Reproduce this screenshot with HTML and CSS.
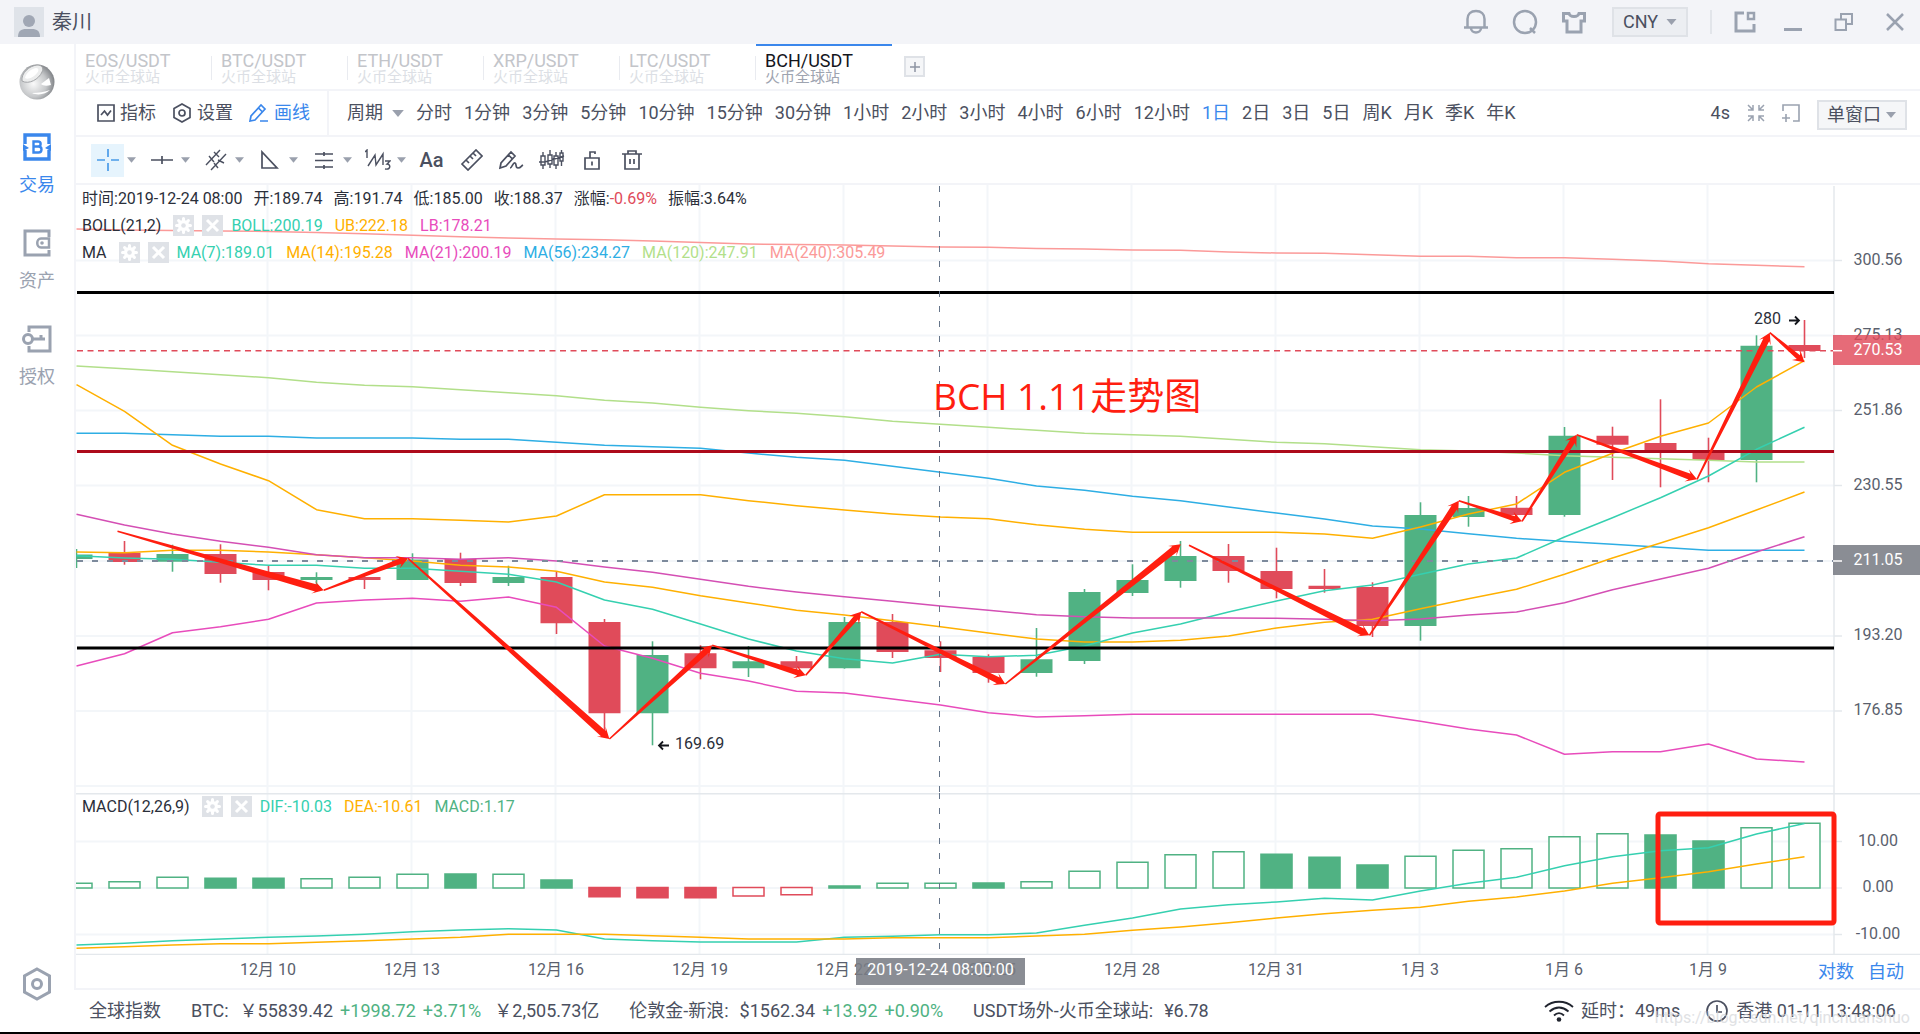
FILE: index.html
```html
<!DOCTYPE html>
<html lang="zh-CN">
<head>
<meta charset="utf-8">
<title>BCH/USDT</title>
<link rel="stylesheet" href="styles.css">
</head>
<body>
<svg class="defs" width="0" height="0" aria-hidden="true">
  <symbol id="caret" viewBox="0 0 10 6"><path d="M0 0h10L5 6z" fill="#9aa0ad"/></symbol>
  <symbol id="gear" viewBox="0 0 21 21"><rect width="21" height="21" fill="#dfe2e7"/><g stroke="#fff" stroke-width="3" stroke-linecap="round"><path d="M10.5 3.500v14M3.500 10.500h14M5.600 5.600l9.800 9.800M15.400 5.600l-9.800 9.800"/></g><circle cx="10.500" cy="10.500" r="5.500" fill="#fff"/><circle cx="10.500" cy="10.500" r="2.300" fill="#dfe2e7"/></symbol>
  <symbol id="cross" viewBox="0 0 21 21"><rect width="21" height="21" fill="#dfe2e7"/><path d="M5 5l11 11M16 5L5 16" stroke="#fff" stroke-width="3"/></symbol>
</svg>
<div class="app">
  <header class="titlebar">
    <svg class="avatar" width="30" height="30" viewBox="0 0 30 30"><rect width="30" height="30" fill="#dfe3e9"/><circle cx="15" cy="14" r="6" fill="#a0a7b4"/><path d="M4 30c0-6 3-8 8-8h6c5 0 8 2 8 8z" fill="#a0a7b4"/></svg>
    <span class="user">秦川</span>
    <div class="window-tools">
      <button aria-label="通知"><svg width="24" height="26" viewBox="0 0 24 26"><path d="M3.500 18V10c0-5 3.500-8 8.500-8s8.500 3 8.500 8v8M0 18.500h24M7 19c0 6 10 6 10 0" class="g2b"/></svg></button>
      <button aria-label="搜索"><svg width="26" height="26" viewBox="0 0 26 26"><circle cx="13" cy="13" r="11" class="g2b"/><path d="M18 19l5 5" class="g2b"/></svg></button>
      <button aria-label="皮肤"><svg width="24" height="24" viewBox="0 0 24 24"><path d="M1.500 3.500h5.500c1 4 9 4 10 0h5.500V11H19v11H5V11H1.500z" class="g3"/></svg></button>
      <label class="select currency"><select aria-label="货币"><option>CNY</option></select><svg width="11" height="6"><use href="#caret"/></svg></label>
      <span class="divider"></span>
      <button class="pin" aria-label="置顶"><svg width="24" height="24" viewBox="0 0 24 24"><path d="M10 3H2v18h18v-7" class="g3"/><path d="M14 3h6v6h-6z" class="g2b"/></svg></button>
      <button class="minimize" aria-label="最小化"><svg width="22" height="22" viewBox="0 0 22 22"><path d="M0 18.500h18" class="g3"/></svg></button>
      <button class="restore" aria-label="还原"><svg width="20" height="20" viewBox="0 0 20 20"><path d="M7 7V2h11v10h-5M1.500 7.500H12V18H1.500z" class="g2"/></svg></button>
      <button class="close" aria-label="关闭"><svg width="18" height="18" viewBox="0 0 18 18"><path d="M1 1l16 16M17 1L1 17" class="g2b"/></svg></button>
    </div>
  </header>

  <div class="body">
    <nav class="sidebar">
      <svg class="logo" width="36" height="36" viewBox="0 0 36 36"><defs><radialGradient id="ball" cx=".4" cy=".55" r=".62"><stop offset="0" stop-color="#fafafa"/><stop offset=".6" stop-color="#c6c8ca"/><stop offset="1" stop-color="#7d8084"/></radialGradient></defs><circle cx="18" cy="18" r="17.500" fill="url(#ball)"/><path d="M3 17C2 9 10 2 18 1c5 0 7 3 5 7-3 7-13 13-20 9z" fill="#eceded" stroke="#a3a5a8" stroke-width="1"/><path d="M6 14c1-5 6-9 11-10 3 0 3 3 1 5-3 4-9 7-12 5z" fill="#fff"/><path d="M22 20l8-6 2 7c-4 1-8 1-10-1z" fill="#fff"/><path d="M13 29c6 0 13-1 18-3-4 4-12 6-18 3z" fill="#fff"/></svg>
      <a href="#trade" class="active"><svg width="28" height="28" viewBox="0 0 28 28"><path d="M2 11V2h24v9M2 17v9h24v-9" fill="none" stroke="#3a87ec" stroke-width="3.400"/><path d="M0 11l6 4-6 3zM28 11l-6 4 6 3z" fill="#3a87ec"/><path d="M10.500 8.500h4.500c3.500 0 3.500 5 0 5h-4.500zm0 5h5c4 0 4 6 0 6h-5z" fill="none" stroke="#3a87ec" stroke-width="2.400"/></svg>交易</a>
      <a href="#assets"><svg width="28" height="28" viewBox="0 0 28 28"><path d="M26 8V2H2v24h24v-5" class="g3"/><path d="M26 9.500h-8c-5 0-5 9 0 9h8z" class="g2b"/><circle cx="19" cy="14" r="1.800" fill="#9aa2b0"/></svg>资产</a>
      <a href="#auth"><svg width="30" height="28" viewBox="0 0 30 28"><path d="M7 7V2h21v24H7v-5" class="g3"/><circle cx="6" cy="14" r="4.500" class="g3"/><path d="M11 14h12M19 14v-4" class="g3"/></svg>授权</a>
      <button class="setup" aria-label="设置"><svg width="30" height="34" viewBox="0 0 30 34"><path d="M15 2l12.500 7v16L15 32 2.500 25V9z" class="g3"/><circle cx="15" cy="17" r="4.500" class="g3"/></svg></button>
    </nav>

    <main class="main">
      <div class="work">
        <div class="tabs" role="tablist">
          <button role="tab">EOS/USDT<small>火币全球站</small></button>
          <button role="tab">BTC/USDT<small>火币全球站</small></button>
          <button role="tab">ETH/USDT<small>火币全球站</small></button>
          <button role="tab">XRP/USDT<small>火币全球站</small></button>
          <button role="tab">LTC/USDT<small>火币全球站</small></button>
          <button role="tab" class="active" aria-selected="true">BCH/USDT<small>火币全球站</small></button>
          <button class="add" aria-label="添加"><svg width="10" height="10" viewBox="0 0 10 10"><path d="M5 0v10M0 5h10" stroke="#8d94a2" stroke-width="1.500"/></svg></button>
        </div>

        <div class="toolbar">
          <div class="group modes">
            <button><svg width="18" height="18" viewBox="0 0 18 18"><path d="M1 1h16v16H1zM4 11l3.500-4 3 4L14 6.500" class="d2"/></svg>指标</button>
            <button><svg width="20" height="20" viewBox="0 0 20 20"><path d="M10 1l8 4.500v9L10 19l-8-4.500v-9z" class="d2"/><circle cx="10" cy="10" r="3" class="d2"/></svg>设置</button>
            <button class="on"><svg width="20" height="18" viewBox="0 0 20 18"><path d="M1 17l1-5L12 1l4 4L6 16zM9.500 4l4 4M11 17h8" fill="none" stroke="#3a87ec" stroke-width="1.700"/></svg>画线</button>
          </div>
          <div class="group periods">
            <button class="pick">周期<svg width="12" height="7"><use href="#caret"/></svg></button>
            <button>分时</button><button>1分钟</button><button>3分钟</button><button>5分钟</button><button>10分钟</button><button>15分钟</button><button>30分钟</button><button>1小时</button><button>2小时</button><button>3小时</button><button>4小时</button><button>6小时</button><button>12小时</button><button class="on">1日</button><button>2日</button><button>3日</button><button>5日</button><button>周K</button><button>月K</button><button>季K</button><button>年K</button>
          </div>
          <div class="group side">
            <span>4s</span>
            <button aria-label="收起"><svg width="18" height="18" viewBox="0 0 18 18"><path d="M1 1l5 5M6 1v5H1M17 1l-5 5M12 1v5h5M1 17l5-5M1 12h5v5M17 17l-5-5M12 17v-5h5" class="g1"/></svg></button>
            <button aria-label="新窗口"><svg width="18" height="18" viewBox="0 0 18 18"><path d="M1 7V1h16v16h-6M4 10v8M0 14h8" class="g2s"/></svg></button>
            <label class="select windows"><select aria-label="窗口"><option>单窗口</option></select><svg width="10" height="6"><use href="#caret"/></svg></label>
          </div>
        </div>

        <div class="draw">
          <button class="has-menu picked" aria-label="十字线"><i><svg width="22" height="22" viewBox="0 0 22 22"><path d="M11 0v8M11 14v8M0 11h8M14 11h8" stroke="#4a9be8" stroke-width="1.700"/></svg></i><svg width="9" height="6"><use href="#caret"/></svg></button>
          <button class="has-menu" aria-label="直线"><i><svg width="22" height="22" viewBox="0 0 22 22"><path d="M0 11h22M11 7v8" class="d2"/></svg></i><svg width="9" height="6"><use href="#caret"/></svg></button>
          <button class="has-menu" aria-label="平行线"><i><svg width="22" height="22" viewBox="0 0 22 22"><path d="M1 16L15 1M6 21L21 5M4 7l5 6M9 3l5 5M9 14l4 5M13 11l6 3" class="d1"/></svg></i><svg width="9" height="6"><use href="#caret"/></svg></button>
          <button class="has-menu" aria-label="形状"><i><svg width="20" height="20" viewBox="0 0 20 20"><path d="M2 2v16h15z" class="d2"/></svg></i><svg width="9" height="6"><use href="#caret"/></svg></button>
          <button class="has-menu" aria-label="斐波那契"><i><svg width="20" height="20" viewBox="0 0 20 20"><path d="M1 4h18M1 10.500h18M1 17h18M10 2v4M10 15v4" class="d2"/></svg></i><svg width="9" height="6"><use href="#caret"/></svg></button>
          <button class="has-menu" aria-label="波浪"><i><svg width="26" height="22" viewBox="0 0 26 22"><path d="M0 3l2-2v8M3 17L10 6l1 10L18 5v11M20 12h5l-3 3c4 0 4 6-2 5" class="d1"/></svg></i><svg width="9" height="6"><use href="#caret"/></svg></button>
          <button aria-label="文字"><i class="aa">Aa</i></button>
          <button aria-label="尺子"><i><svg width="22" height="22" viewBox="0 0 22 22"><path d="M1 15L15 1l6 6L7 21zM5 11l3 3M9 7l3 3M12 4l3 3" class="d2"/></svg></i></button>
          <button aria-label="画笔"><i><svg width="25" height="20" viewBox="0 0 25 20"><path d="M1 18l1-5L12 2l4 4L7 16zM9.500 5l4 4M11 18c2 0 3-6 5-5s0 5 3 5 3-2 5-3" class="d2"/></svg></i></button>
          <button aria-label="形态"><i><svg width="26" height="20" viewBox="0 0 26 20"><path d="M2 6h4v9H2zM4 2v4M4 15v4M9 5h4v9H9zM11 0v5M11 14v4M15 6h4v9h-4zM17 2v4M17 15v4M21 3h3v8h-3zM22.500 0v3M22.500 11v5M0 12h6L25 6" class="d1"/></svg></i></button>
          <button aria-label="锁定"><i><svg width="18" height="20" viewBox="0 0 18 20"><path d="M2 8h14v11H2zM7 8V2h5v2M9 11.500v4" class="d2"/></svg></i></button>
          <button aria-label="删除"><i><svg width="20" height="20" viewBox="0 0 20 20"><path d="M0 4h20M3 4v15h14V4M6 4V1h8v3M8 9v5M12 9v5" class="d2"/></svg></i></button>
        </div>

        <section class="chart">
          <div class="pane">
            <svg id="price" viewBox="76 185 1844 608"></svg>
            <div class="legend">
              <p class="quote"><span>时间:2019-12-24 08:00</span><span>开:189.74</span><span>高:191.74</span><span>低:185.00</span><span>收:188.37</span><span>涨幅:<b class="c-down">-0.69%</b></span><span>振幅:3.64%</span></p>
              <p><span class="name">BOLL(21,2)</span><button aria-label="设置 BOLL"><svg width="21" height="21"><use href="#gear"/></svg></button><button aria-label="关闭 BOLL"><svg width="21" height="21"><use href="#cross"/></svg></button><span class="c-teal">BOLL:200.19</span><span class="c-gold">UB:222.18</span><span class="c-pink">LB:178.21</span></p>
              <p><span class="name">MA</span><button aria-label="设置 MA"><svg width="21" height="21"><use href="#gear"/></svg></button><button aria-label="关闭 MA"><svg width="21" height="21"><use href="#cross"/></svg></button><span class="c-teal">MA(7):189.01</span><span class="c-gold">MA(14):195.28</span><span class="c-pink">MA(21):200.19</span><span class="c-blue">MA(56):234.27</span><span class="c-lime">MA(120):247.91</span><span class="c-rose">MA(240):305.49</span></p>
            </div>
          </div>
          <div class="pane">
            <svg id="macd" viewBox="76 793 1844 162"></svg>
            <div class="legend low">
              <p><span class="name">MACD(12,26,9)</span><button aria-label="设置 MACD"><svg width="21" height="21"><use href="#gear"/></svg></button><button aria-label="关闭 MACD"><svg width="21" height="21"><use href="#cross"/></svg></button><span class="c-teal">DIF:-10.03</span><span class="c-gold">DEA:-10.61</span><span class="c-up">MACD:1.17</span></p>
            </div>
          </div>
          <div class="pane">
            <svg id="dates" viewBox="76 955 1844 33"></svg>
            <div class="scale"><button>对数</button><button>自动</button></div>
          </div>
        </section>
      </div>

      <footer class="status">
        <span>全球指数</span>
        <span class="item"><span class="key">BTC:</span><span>￥55839.42</span><b class="c-up">+1998.72</b><b class="c-up">+3.71%</b><span class="yen">￥2,505.73亿</span></span>
        <span class="item"><span class="key">伦敦金-新浪:</span><span>$1562.34</span><b class="c-up">+13.92</b><b class="c-up">+0.90%</b></span>
        <span class="item"><span class="key">USDT场外-火币全球站:</span><span>¥6.78</span></span>
        <span class="net"><svg width="30" height="22" viewBox="0 0 30 22"><path d="M1 7c8-7 20-7 28 0M5.500 11.500c6-5 13-5 19 0M10 15.500c3-3 7-3 10 0" fill="none" stroke="#20242e" stroke-width="1.800"/><circle cx="15" cy="19.500" r="2.300" fill="#20242e"/></svg>延时：49ms</span>
        <span class="net clock"><svg width="22" height="22" viewBox="0 0 22 22"><circle cx="11" cy="11" r="10" class="d2"/><path d="M11 5v7h5" class="d2"/></svg>香港 01-11 13:48:06</span>
        <span class="watermark">https://blog.csdn.net/qinchuanshuo</span>
      </footer>
    </main>
  </div>
</div>
<script src="chart.js"></script>
</body>
</html>
```
FILE: styles.css
```css
* { box-sizing: border-box; }
body { margin: 0; background: #fff; color: #4b5060; font: 18px/24px Roboto, "Noto Sans CJK SC", sans-serif; }
button, select { font: inherit; color: inherit; background: none; border: 0; padding: 0; margin: 0; cursor: pointer; }
svg { display: block; flex: none; }
p { margin: 0; }
b { font-weight: 400; }
a { color: inherit; text-decoration: none; }
.defs { position: absolute; }

.g1, .g2, .g2b, .g2s, .g3 { fill: none; stroke: #9aa2b0; }
.g1 { stroke-width: 1.5; }
.g2 { stroke-width: 2; }
.g2b { stroke-width: 2.5; }
.g2s { stroke-width: 1.6; }
.g3 { stroke-width: 3; }
.d1, .d2 { fill: none; stroke: #4b5060; }
.d1 { stroke-width: 1.4; }
.d2 { stroke-width: 1.7; }

.c-down { color: #e04b5a; }
.c-up { color: #50b283; }
.c-teal { color: #35d0b0; }
.c-gold { color: #ffb000; }
.c-pink { color: #e84cbc; }
.c-blue { color: #2eaee4; }
.c-lime { color: #b2df8a; }
.c-rose { color: #fb9a99; }

.app { display: flex; flex-direction: column; min-height: 100vh; border-bottom: 2px solid #000; }

.titlebar { display: flex; align-items: center; height: 44px; padding: 0 16px 0 14px; background: #f3f4f8; }
.user { margin-left: 8px; font-size: 20px; }
.window-tools { display: flex; align-items: center; margin-left: auto; }
.window-tools button { margin-left: 24px; }
.window-tools .pin { margin-left: 22px; }
.window-tools .minimize { margin-left: 26px; }
.window-tools .restore { margin-left: 28px; }
.window-tools .close { margin-left: 32px; }
.divider { width: 2px; height: 24px; margin-left: 22px; background: #e2e5ea; }
.select { position: relative; display: flex; align-items: center; height: 30px; border: 2px solid #dfe2e7; background: #f5f6f8; }
.select select { width: 100%; height: 100%; padding-left: 9px; appearance: none; }
.select svg { position: absolute; right: 9px; pointer-events: none; }
.currency { width: 76px; margin-left: 26px; background: #eceef2; }
.windows { width: 90px; margin-top: 4px; }
.windows select { padding-left: 8px; }

.body { display: flex; flex: 1; }
.sidebar { display: flex; flex-direction: column; align-items: center; width: 74px; padding: 20px 0 31px; flex: none; color: #9aa2b0; }
.sidebar a { display: flex; flex-direction: column; align-items: center; gap: 12px; height: 64px; margin-top: 32px; }
.sidebar .active { margin-top: 33px; color: #3a87ec; }
.sidebar .setup { margin-top: auto; }
.main { display: flex; flex: 1; flex-direction: column; min-width: 0; }
.work { border-left: 2px solid #f3f4f8; border-bottom: 2px solid #f3f4f8; }

.tabs { display: flex; height: 47px; border-bottom: 2px solid #f3f4f8; }
.tabs [role=tab] { position: relative; display: flex; flex-direction: column; align-items: flex-start; width: 136px; padding: 6px 9px 0; border-top: 2px solid transparent; color: #c3c5ca; line-height: 18px; }
.tabs [role=tab]:not(.active)::after { content: ""; position: absolute; right: 0; top: 10px; height: 24px; border-left: 1px solid #e9ebf0; }
.tabs small { font-size: 15px; line-height: 14px; color: #dcdfe5; }
.tabs .active { border-top-color: #3a87ec; color: #14161c; }
.tabs .active small { color: #9ea4b0; }
.tabs .add { display: flex; align-items: center; justify-content: center; width: 21px; height: 21px; margin: 12px 0 0 12px; border: 2px solid #dfe2e7; background: #f5f6f8; }

.toolbar { display: flex; height: 46px; border-bottom: 2px solid #f3f4f8; }
.group { display: flex; align-items: center; }
.modes { gap: 16px; padding: 0 17px 0 21px; border-right: 2px solid #f3f4f8; }
.modes button { display: flex; align-items: center; gap: 5px; }
.periods { gap: 12px; padding-left: 18px; }
.periods button { flex: none; white-space: nowrap; }
.pick { display: flex; align-items: center; gap: 9px; }
.on { color: #3a87ec; }
.side { gap: 17px; margin-left: auto; padding-right: 13px; }

.draw { display: flex; align-items: center; height: 48px; padding-left: 15px; border-bottom: 2px solid #f3f4f8; }
.draw button { display: flex; align-items: center; width: 40px; gap: 3px; }
.draw .has-menu { width: 54px; }
.draw i { display: flex; align-items: center; justify-content: center; width: 33px; height: 33px; }
.draw .aa { font-style: normal; font-size: 20px; font-weight: 500; }
.picked i { background: #e6f4fd; }

.pane { display: grid; }
.pane > * { grid-area: 1 / 1; }
.pane > svg { width: 100%; height: auto; font-size: 16px; }
.legend { position: relative; align-self: start; padding: 0 6px; color: #2b2f3a; font-size: 16px; line-height: 27px; }
.legend p { display: flex; align-items: center; gap: 8px; height: 27px; }
.legend .name { margin-right: 4px; }
.legend span { white-space: nowrap; }
.legend span + span { margin-left: 4px; }
.scale { position: relative; display: flex; align-self: center; justify-self: end; gap: 14px; padding-right: 16px; color: #3a87ec; }
.legend .quote { gap: 7px; }

.status { position: relative; display: flex; flex: 1; align-items: center; padding: 0 24px 0 15px; }
.item { display: flex; gap: 7px; margin-left: 30px; }
.key { margin-right: 4px; }
.yen { margin-left: 6px; }
.net { display: flex; align-items: center; gap: 7px; margin-left: auto; }
.net.clock { gap: 8px; margin-left: 26px; }
.watermark { position: absolute; right: 10px; bottom: 2px; color: #d4d6da; opacity: .7; font-size: 16px; }

.grid { stroke: #f3f6f9; stroke-width: 2; fill: none; }
.axis { stroke: #e4e8ec; stroke-width: 1.5; fill: none; }
.tick { fill: #5a5f6d; text-anchor: middle; }
.line { fill: none; stroke-width: 1.5; stroke-linejoin: round; }
.up { fill: #50b283; stroke: #50b283; stroke-width: 1.6; }
.down { fill: #e04b5a; stroke: #e04b5a; stroke-width: 1.6; }
.body-shape { stroke: none; }
.hollow { fill: #fff; stroke-width: 1.5; }
.level { stroke: #000; stroke-width: 3; }
.level.mid { stroke: #ad0a1b; }
.last { stroke: #e04b5a; stroke-width: 1.5; stroke-dasharray: 6 4.5; }
.cursor-x { stroke: #7d8a9c; stroke-width: 2; stroke-dasharray: 6 9; }
.cursor-y { stroke: #66758a; stroke-width: 1; stroke-dasharray: 6 9; }
.trend { fill: #ff1e10; }
.frame { fill: none; stroke: #ff1e10; stroke-width: 5; }
.title { fill: #ff1e10; font: 37px "Open Sans", "Noto Sans CJK SC", sans-serif; }
.mark { fill: #2b2f3a; }
.arrow { fill: none; stroke: #14161c; stroke-width: 1.8; }
.badge { fill: #7a7d85; fill-opacity: .88; }
.badge.red { fill: #e04b5a; fill-opacity: .82; }
.badge-text { fill: #fff; text-anchor: middle; }
.badge-tick { stroke: #fff; stroke-width: 1.5; }
```
FILE: chart.js
```js
// Scene units follow the viewBox of the three panes, which share one x scale.
const LEFT = 76, RIGHT = 1834, EDGE = 1920, STEP = 48;
const x = i => 76.5 + STEP * i;

// [direction, bodyTop, bodyBottom, wickTop, wickBottom]
const candles = [
  ['up',554.5,559,549,568],['down',552.7,562,541,564.7],['up',554,561.7,544.7,571.7],['down',554,574,544.3,582.7],
  ['down',572,580,566,590.3],['up',577,580,572.3,587],['down',577,580,576,589],['up',559.5,580,553.3,580],
  ['down',559,583,552.7,586],['up',577,583,565.7,586],['down',577,623.3,571.7,634],['down',622,713.3,619,733],
  ['up',655,713.3,641.3,745.3],['down',653.3,668.3,645.3,679.3],['up',661.3,668.3,646,677],['down',661.3,668.3,656,675],
  ['up',622,668.3,617,668.7],['down',622,652,614,658],['down',650.3,658,641.3,672],['down',656.7,673,654.3,682.7],
  ['up',659.3,673,628,676.7],['up',592,661,589,664],['up',580,593,564.3,596],['up',556,581,541,587.7],
  ['down',556,571,544,582.7],['down',571,589,547.7,598.3],['down',585.7,589,569,592.7],['down',587,626,582.3,637],
  ['up',515,626,502.3,640.7],['up',508,517,496,526.7],['down',507.7,515,496,521],['up',435.7,515,427,516.7],
  ['down',435.7,444.7,426.7,480],['down',443,451,399.3,487.3],['down',452,460,437.7,482.3],['up',345.7,460,335.3,482.3],
  ['down',345,351,320,358]
];

const priceLines = {
  '#fb9a99': [229,230,230.5,231,231.5,232.5,233.7,235.3,236.7,238,239,239.7,241,242.5,244,244.5,245,246,247,247.3,248.5,249,250,250.3,252,253,253.3,254.7,256.3,256.3,257.7,257.7,259.3,261,263.7,265.3,266.7],
  '#b2df8a': [366,368.7,371.7,374.7,377.7,382.3,385.3,386.7,389.7,392.7,395.7,400.3,403,407.3,410.7,413.3,416.7,421.3,424.3,427.3,430.3,433.3,434.7,436.3,439.3,442.3,443.7,446.7,449.7,451,453,455.7,457.3,458.7,460.3,462,462],
  '#2eaee4': [433.3,433.3,434.7,436.3,436.3,438,438,438,439.3,439.3,442.3,445.3,446.7,448.3,453,457.3,460.3,466.3,472.3,478.3,486,490.3,496.3,500.7,507,513,519,526,529,533.7,538.3,541.5,544.3,547.3,550.3,550.3,550.3],
  '#ffb000': [384.7,411.3,445.3,464,480.7,509.7,518.7,518.7,520.3,522,516,494.7,494.7,494.7,500.7,505.7,510,514,517,518.7,524.7,529.3,532.3,532.3,532.3,532.3,534,538.3,527,514,504,472.3,453.3,436.3,423,387,360.7],
  '#ffb001': [552,552.7,550.3,550.3,552,554.7,557.7,561,565.3,567,571.3,582,587.3,595.7,603,610.3,615,620.7,626.7,633,639,642,642,640.3,636,628,622.3,619.3,608.7,598.7,589.3,574.3,558,543,527.7,510,492],
  '#35d0b0': [555.7,558,559.3,562.3,565.3,565.3,568.3,568.3,571.3,574.3,582,600,609.3,624,639,651,658.7,663,654.3,656.7,655.3,646,633,624,612,601,590.7,585,574.3,564,558,537,517.7,497.7,476,449.3,427.3],
  '#d44fb4': [514.3,525,534,541.3,547.3,554.7,557.7,557.7,559.3,557.7,561,567,572.3,579.3,586.3,592,596.7,601.3,606,610.3,614.7,616.7,618,618,618,618.3,619.3,620.7,619,615,612,602.7,589.7,579,568.3,552,536.7],
  '#e84cbc': [666,653.7,632.7,626.7,619.3,603,600,598.3,601.3,597,607.3,646,658.3,673.3,681,691.3,693,699,705,712.7,717,715.7,714.3,714.3,714.3,714.3,714.3,714.3,721.3,729,735,754.3,751.7,751.7,744,759,762]
};

// [style, far edge]: lower-case is hollow, upper-case is solid
const bars = [
  ['g',883.3],['g',881.7],['g',877.3],['G',878.3],['G',878.3],['g',878.7],['g',877.3],['g',874.3],['G',874],['g',874.3],
  ['G',880],['R',896.7],['R',897.7],['R',897.7],['r',896],['r',894.7],['G',886],['g',883.3],['g',883.3],['G',883],
  ['g',881.7],['g',871.3],['g',862.3],['g',854.7],['g',851.7],['G',854.3],['G',857.3],['G',865],['g',856.3],['g',850.3],
  ['g',848.7],['g',836.7],['g',833.7],['G',835],['G',841],['g',827.7],['g',823.3]
];
const macdLines = {
  '#35d0b0': [945,943.3,940.7,939,937.3,936,934.3,931.7,930,928.7,930,939,940.7,942,942,942,937.3,936.3,934.7,934.7,933,925.3,918,909,904.7,902,898.3,900,891,883.3,877.3,865.7,856.7,850.7,847.7,834,823.5],
  '#ffb000': [948.3,946.7,945,943.7,943.7,942.3,940.7,939,937.3,934.3,934.3,934.3,935.7,937.3,939,939,939,937.7,937.7,937.7,936,934.3,930.3,927,922.7,918,913.7,910.3,907.3,901.3,897,891,883.3,877.7,871.7,864,856.7]
};

const trend = [
  [[117.5,531.3],[323.7,590.3]], [[323.7,590.3],[408,558.3]], [[408,558.3],[609.4,739]], [[609.4,739],[712.2,645.3]],
  [[712.2,645.3],[805.7,675.3]], [[805.7,675.3],[861.2,611.7]], [[861.2,611.7],[1005.3,684]], [[1005.3,684],[1180.8,544.3]],
  [[1189,545.3],[1369.4,635.3]], [[1369.4,635.3],[1458.8,500.7]], [[1458.8,500.7],[1522,521.3]], [[1522,521.3],[1576.7,434.7]],
  [[1576.7,434.7],[1697,479.3]], [[1697,479.3],[1769.8,332.7]], [[1769.8,332.7],[1804.5,362.3]]
];

const dates = ['12月 10','12月 13','12月 16','12月 19','12月 22','12月 25','12月 28','12月 31','1月 3','1月 6','1月 9'];
const dateX = i => 267.5 + 144 * i;

const path = (cls, d) => `<path class="${cls}" d="${d}"/>`;
const hline = (cls, y, a = LEFT, b = RIGHT) => path(cls, `M${a} ${y}H${b}`);
const text = (cls, tx, ty, s) => `<text class="${cls}" x="${tx}" y="${ty}">${s}</text>`;
const poly = (colour, ys) =>
  `<polyline class="line" stroke="${colour}" points="${ys.map((y, i) => x(i) + ',' + y).join(' ')}"/>`;
const columns = (top, bottom) => dates.map((_, i) => path('grid', `M${dateX(i)} ${top}V${bottom}`)).join('');

function taper([[ax, ay], [bx, by]]) {
  const len = Math.hypot(bx - ax, by - ay), ux = (bx - ax) / len, uy = (by - ay) / len;
  const at = (d, w) => `${(ax + ux * d - uy * w).toFixed(1)},${(ay + uy * d + ux * w).toFixed(1)}`;
  const neck = Math.min(3.6, 2.2 + len / 150);
  return `<polygon class="trend" points="${[at(0, .8), at(len - 8, neck), at(len - 11, 6.5), at(len, 0), at(len - 11, -6.5), at(len - 8, -neck), at(0, -.8)].join(' ')}"/>`;
}

function drawPrice() {
  const rows = [[260.5,'300.56'],[335.5,'275.13'],[410.5,'251.86'],[485.5,'230.55'],[561,''],[636,'193.20'],[711,'176.85'],[786,'']];
  let s = columns(185, 793);
  rows.forEach(([y, label]) => {
    s += hline('grid', y);
    if (label) s += hline('axis', y, RIGHT, 1842) + text('tick', 1878, y + 4, label);
  });
  s += path('axis', `M${RIGHT} 186V793`);
  candles.forEach(([dir, t, b, wt, wb], i) => {
    const l = Math.max(LEFT, x(i) - 16), r = x(i) + 16;
    s += path(dir, `M${x(i)} ${wt}V${wb}`) + path(dir + ' body-shape', `M${l} ${t}H${r}V${b}H${l}z`);
  });
  for (const c in priceLines) s += poly(c, priceLines[c]);
  s += hline('level', 292.5, 77) + hline('level mid', 451.5, 77) + hline('level', 648, 77);
  s += hline('last', 350.7, 77) + hline('cursor-x', 561, 77) + path('cursor-y', 'M939.5 186V793');
  s += trend.map(taper).join('');
  s += text('title', 933, 410, 'BCH 1.11走势图');
  s += text('mark', 675, 749, '169.69') + path('arrow', 'M669 745.5H659M663 741.5l-4 4 4 4');
  s += text('mark', 1754, 324, '280') + path('arrow', 'M1789 320.5h10M1795 316.5l4 4-4 4');
  s += `<rect class="badge red" x="1833" y="335" width="87" height="30"/>` + text('badge-text', 1878, 355, '270.53') + hline('badge-tick', 350.7, 1833, 1842);
  s += `<rect class="badge" x="1833" y="545" width="87" height="30"/>` + text('badge-text', 1878, 565, '211.05') + hline('badge-tick', 561, 1833, 1842);
  document.getElementById('price').innerHTML = s;
}

function drawMacd() {
  let s = columns(793, 955);
  [[841.5,'10.00'],[888,'0.00'],[934.5,'-10.00']].forEach(([y, label]) => {
    s += hline('grid', y) + hline('axis', y, RIGHT, 1842) + text('tick', 1878, y + 4, label);
  });
  s += hline('axis', 793.8, LEFT, EDGE) + hline('axis', 954.5, LEFT, EDGE) + path('axis', `M${RIGHT} 793V955`);
  bars.forEach(([kind, y], i) => {
    const up = kind.toLowerCase() === 'g', solid = kind !== kind.toLowerCase();
    const top = up ? y : 887.5, bottom = up ? 888 : y;
    const l = Math.max(LEFT - 2, x(i) - 15.5), r = x(i) + 15.5;
    s += path((up ? 'up' : 'down') + (solid ? '' : ' hollow'), `M${l} ${top}H${r}V${bottom}H${l}z`);
  });
  for (const c in macdLines) s += poly(c, macdLines[c]);
  s += path('cursor-y', 'M939.5 793V950');
  s += `<rect class="frame" x="1658" y="814" width="176" height="109" rx="2"/>`;
  document.getElementById('macd').innerHTML = s;
}

function drawDates() {
  let s = dates.map((d, i) => text('tick', dateX(i) + .5, 975, d)).join('');
  s += `<rect class="badge" x="856" y="958" width="169" height="27"/>` + text('badge-text', 940.5, 975, '2019-12-24 08:00:00');
  document.getElementById('dates').innerHTML = s;
}

drawPrice();
drawMacd();
drawDates();
```
